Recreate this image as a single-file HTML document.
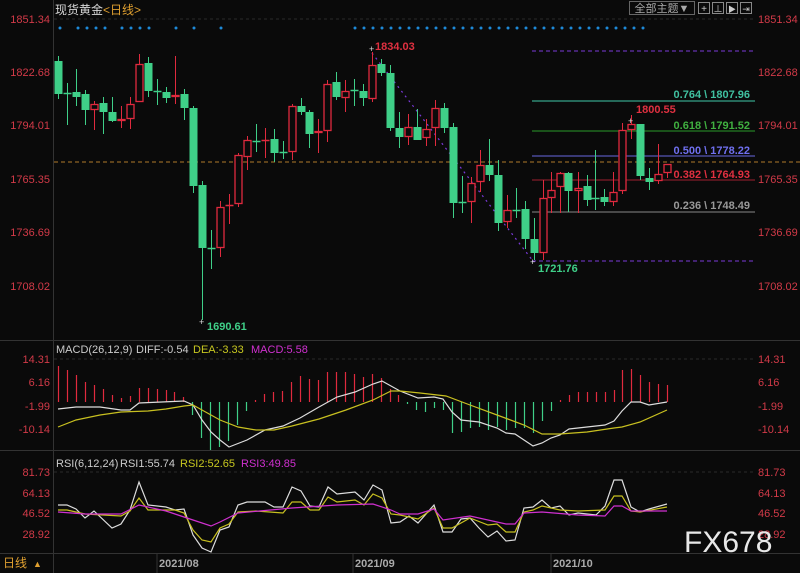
<!DOCTYPE html>
<html><head><meta charset="utf-8"><style>
html,body{margin:0;padding:0;background:#0a0a0a;width:800px;height:573px;overflow:hidden}
svg{display:block}
text{font-family:"Liberation Sans","Noto Sans CJK SC",sans-serif}
</style></head><body>
<svg id="s" width="800" height="573" xmlns="http://www.w3.org/2000/svg"></svg>
<script>
var s=document.getElementById('s'),h='';
var R='#e02a3e',G='#3fcf88',LBL='#d23a48';
function L(x1,y1,x2,y2,c,w,d){h+='<line x1="'+x1+'" y1="'+y1+'" x2="'+x2+'" y2="'+y2+'" stroke="'+c+'" stroke-width="'+(w||1)+'"'+(d?' stroke-dasharray="'+d+'"':'')+'/>';}
function T(x,y,t,c,sz,a,wt){h+='<text x="'+x+'" y="'+y+'" fill="'+c+'" font-size="'+(sz||11)+'"'+(a?' text-anchor="'+a+'"':'')+(wt?' font-weight="bold"':'')+'>'+t+'</text>';}
function P(pts,c){h+='<polyline fill="none" stroke="'+c+'" stroke-width="1.2" points="'+pts.map(function(p){return p.join(',')}).join(' ')+'"/>';}
L(53.5,0,53.5,553,'#333');
L(0,340.5,800,340.5,'#333');L(0,450.5,800,450.5,'#333');L(0,553.5,800,553.5,'#333');
L(54,19,755,19,'#2a2a2a',1,'3,3');L(54,359,755,359,'#2a2a2a',1,'3,3');L(54,472,755,472,'#2a2a2a',1,'3,3');
T(55,14,'现货黄金','#d8d8d8',12);T(103,14,'&lt;日线&gt;','#e0a030',12);
h+='<rect x="629.5" y="1.5" width="65" height="13" fill="none" stroke="#666"/>';T(662,12,'全部主题▼','#aaa',11,'middle');
for(var k=0;k<4;k++){h+='<rect x="'+(698.5+k*14)+'" y="2.5" width="11" height="11" fill="none" stroke="#888"/>';}
T(704,12,'+','#ccc',10,'middle');T(718,12,'⊥','#ccc',9,'middle');T(732,12,'▶','#ccc',8,'middle');T(746,12,'⇥','#ccc',9,'middle');
var pl=[['1851.34',19],['1822.68',72],['1794.01',125],['1765.35',179],['1736.69',232],['1708.02',286]];
pl.forEach(function(p){T(50,p[1]+4,p[0],LBL,11,'end');T(758,p[1]+4,p[0],LBL,11);});
var dx=[60,78,87,96,105,122,131,140,149,176,194,221];for(var x=355;x<=643;x+=9)dx.push(x);
dx.forEach(function(x){h+='<circle cx="'+x+'" cy="28" r="1.5" fill="#1e8ad8"/>';});
L(54,162,800,162,'#b07a2a',1,'4,3');
L(532,51,755,51,'#7a3ad8',1,'4,3');L(532,261,755,261,'#7a3ad8',1,'4,3');
L(532,101,755,101,'#40c8a8');L(532,131,755,131,'#2a9a2a');L(532,156,755,156,'#6868e0');L(532,180,755,180,'#a02030');L(532,212,755,212,'#888');
T(750,98,'0.764 \\ 1807.96','#40c0a0',11,'end',1);T(750,129,'0.618 \\ 1791.52','#40b040',11,'end',1);
T(750,154,'0.500 \\ 1778.22','#7070f0',11,'end',1);T(750,178,'0.382 \\ 1764.93','#e03040',11,'end',1);T(750,209,'0.236 \\ 1748.49','#999',11,'end',1);
L(372,53,533,261,'#7a3ad8',1.2,'2,4');
var C=[[58,61,94,56,99],[67,93,93,83,125],[76,92,97,69,106],[85,94,110,90,125],[94,110,104,101,130],[103,103,112,97,134],[112,112,121,97,122],[121,121,119,106,128],[130,119,104,97,129],[139,102,64,54,102],[148,63,91,57,97],[157,91,91,79,105],[166,92,98,87,103],[175,97,95,56,104],[184,94,108,89,120],[193,108,186,106,193],[202,185,248,181,320],[211,248,248,230,269],[220,248,207,201,257],[229,206,205,194,224],[238,204,155,153,207],[247,157,140,136,170],[256,141,141,124,152],[265,141,140,128,158],[274,139,153,129,162],[283,152,152,141,159],[292,152,106,104,160],[301,106,112,98,115],[309,112,134,110,148],[318,133,131,119,153],[327,131,84,80,142],[336,82,97,72,100],[345,98,91,80,112],[354,90,90,79,106],[363,91,98,84,106],[372,99,65,52,102],[381,64,73,59,76],[390,73,128,65,131],[399,128,137,112,148],[408,137,127,114,145],[417,127,140,109,140],[426,138,129,119,146],[435,128,108,100,146],[444,108,128,103,133],[453,127,203,123,218],[462,202,202,176,213],[471,202,183,177,223],[480,182,165,150,192],[489,165,175,139,181],[498,175,223,160,231],[507,222,210,195,228],[516,210,210,188,218],[525,209,239,201,249],[534,239,253,218,260],[543,253,198,180,260],[551,198,190,172,213],[560,187,173,172,213],[568,173,191,172,212],[578,191,188,172,213],[587,186,200,175,206],[595,198,198,150,210],[604,197,202,189,206],[613,202,192,172,206],[622,191,130,123,194],[631,130,124,115,139],[640,124,176,124,180],[649,178,182,168,190],[658,181,174,144,184],[667,173,164,164,178]];
C.forEach(function(c){var x=c[0],o=c[1],cl=c[2],up=cl<o,col=up?R:G,t=Math.min(o,cl),b=Math.max(o,cl);
L(x+0.5,c[3],x+0.5,t,col);L(x+0.5,b,x+0.5,c[4],col);
if(b-t<2){L(x-3.5,t+0.5,x+4.5,t+0.5,col,1.5);}
else if(up){h+='<rect x="'+(x-3)+'" y="'+(t+0.5)+'" width="7" height="'+(b-t-1)+'" fill="#0a0a0a" stroke="'+col+'" stroke-width="1.3"/>';}
else{h+='<rect x="'+(x-3.5)+'" y="'+t+'" width="8" height="'+(b-t)+'" fill="'+col+'"/>';}});
T(375,50,'1834.03','#e03040',11,null,1);T(636,113,'1800.55','#e03040',11,null,1);
T(538,272,'1721.76','#3fcf88',11,null,1);T(207,330,'1690.61','#3fcf88',11,null,1);
T(369,52,'+','#ddd',9);T(628,124,'+','#ddd',9);T(530,265,'+','#ddd',9);T(199,325,'+','#ddd',9);
T(56,353,'MACD(26,12,9)','#ccc',11);T(136,353,'DIFF:-0.54','#ccc',11);T(193,353,'DEA:-3.33','#c8c820',11);T(251,353,'MACD:5.58','#d030d0',11);
[['14.31',359],['6.16',382],['-1.99',406],['-10.14',429]].forEach(function(p){T(50,p[1]+4,p[0],LBL,11,'end');T(758,p[1]+4,p[0],LBL,11);});
var M=[366,370,375,382,385,389,395,398,396,388,388,389,390,392,397,415,438,450,447,441,425,411,400,394,392,391,382,376,379,380,372,372,372,374,377,374,378,389,395,404,410,412,408,410,433,432,428,427,430,427,430,428,428,433,421,411,400,395,392,392,392,392,390,370,369,375,382,384,385];
M.forEach(function(v,i){var x=Math.round(58+8.96*i)+0.5;L(x,402,x,v,v<402?R:G,1.2);});
P([[58,409],[76,407],[100,407],[121,410],[130,410],[139,403],[184,401],[193,405],[202,420],[211,432],[220,440],[229,447],[247,440],[265,430],[283,426],[300,418],[319,407],[337,397],[355,392],[373,384],[382,381],[391,386],[400,391],[418,398],[434,397],[443,399],[452,412],[461,420],[479,422],[497,428],[506,433],[515,434],[524,440],[533,446],[542,443],[551,438],[560,435],[569,429],[596,426],[605,425],[614,421],[622,411],[631,402],[640,402],[649,405],[667,402]],'#ddd');
P([[58,427],[76,420],[100,415],[121,412],[148,411],[166,409],[184,406],[193,405],[202,410],[220,420],[238,427],[256,430],[274,430],[292,426],[319,419],[346,410],[373,400],[391,391],[400,391],[420,393],[446,396],[470,405],[497,415],[524,425],[542,434],[560,434],[587,432],[614,428],[622,427],[640,422],[667,410]],'#c8c020');
T(56,467,'RSI(6,12,24)','#ccc',11);T(120,467,'RSI1:55.74','#ccc',11);T(180,467,'RSI2:52.65','#c8c820',11);T(241,467,'RSI3:49.85','#d030d0',11);
[['81.73',472],['64.13',493],['46.52',513],['28.92',534]].forEach(function(p){T(50,p[1]+4,p[0],LBL,11,'end');T(758,p[1]+4,p[0],LBL,11);});
P([[58,505],[67,505],[76,509],[85,518],[94,511],[112,528],[121,524],[130,510],[139,482],[148,505],[166,507],[175,510],[184,509],[193,535],[202,548],[211,552],[220,530],[229,527],[238,505],[247,502],[265,502],[274,507],[283,507],[292,487],[301,491],[310,506],[319,507],[328,487],[337,494],[355,492],[364,500],[373,485],[382,490],[391,523],[400,522],[409,516],[418,523],[434,505],[443,532],[452,532],[461,519],[470,518],[479,528],[488,537],[497,531],[506,541],[515,540],[524,508],[533,507],[542,500],[551,508],[560,506],[569,515],[578,513],[596,515],[605,506],[614,480],[622,480],[631,507],[640,512],[649,509],[667,504]],'#ddd');
P([[58,510],[67,510],[85,514],[103,515],[121,516],[130,511],[139,498],[148,510],[175,510],[184,513],[193,530],[202,540],[211,542],[220,528],[229,524],[238,512],[256,511],[283,513],[292,502],[301,502],[310,510],[319,510],[328,497],[337,502],[355,500],[364,505],[373,494],[382,498],[391,514],[400,515],[418,519],[434,508],[443,528],[452,528],[470,518],[488,525],[497,524],[506,532],[515,532],[524,512],[533,510],[542,506],[560,510],[578,511],[605,510],[614,496],[622,496],[631,511],[640,512],[667,507]],'#c8c020');
P([[58,512],[85,514],[121,514],[139,505],[166,511],[193,520],[211,526],[220,522],[238,513],[292,508],[337,505],[373,504],[391,510],[400,514],[418,514],[434,509],[443,520],[470,516],[506,524],[515,524],[524,513],[542,512],[578,515],[605,516],[614,506],[622,506],[631,511],[667,511]],'#d030d0');
T(3,567,'日线','#e0a030',12);T(33,567,'▲','#e0a030',9);
L(53.5,553,53.5,573,'#333');
T(159,567,'2021/08','#aaa',11,null,1);T(355,567,'2021/09','#aaa',11,null,1);T(553,567,'2021/10','#aaa',11,null,1);
L(157,553,157,573,'#333');L(353,553,353,573,'#333');L(551,553,551,573,'#333');
T(684,552,'FX678','#e8e8e8',30);
s.innerHTML=h;
</script>
</body></html>
